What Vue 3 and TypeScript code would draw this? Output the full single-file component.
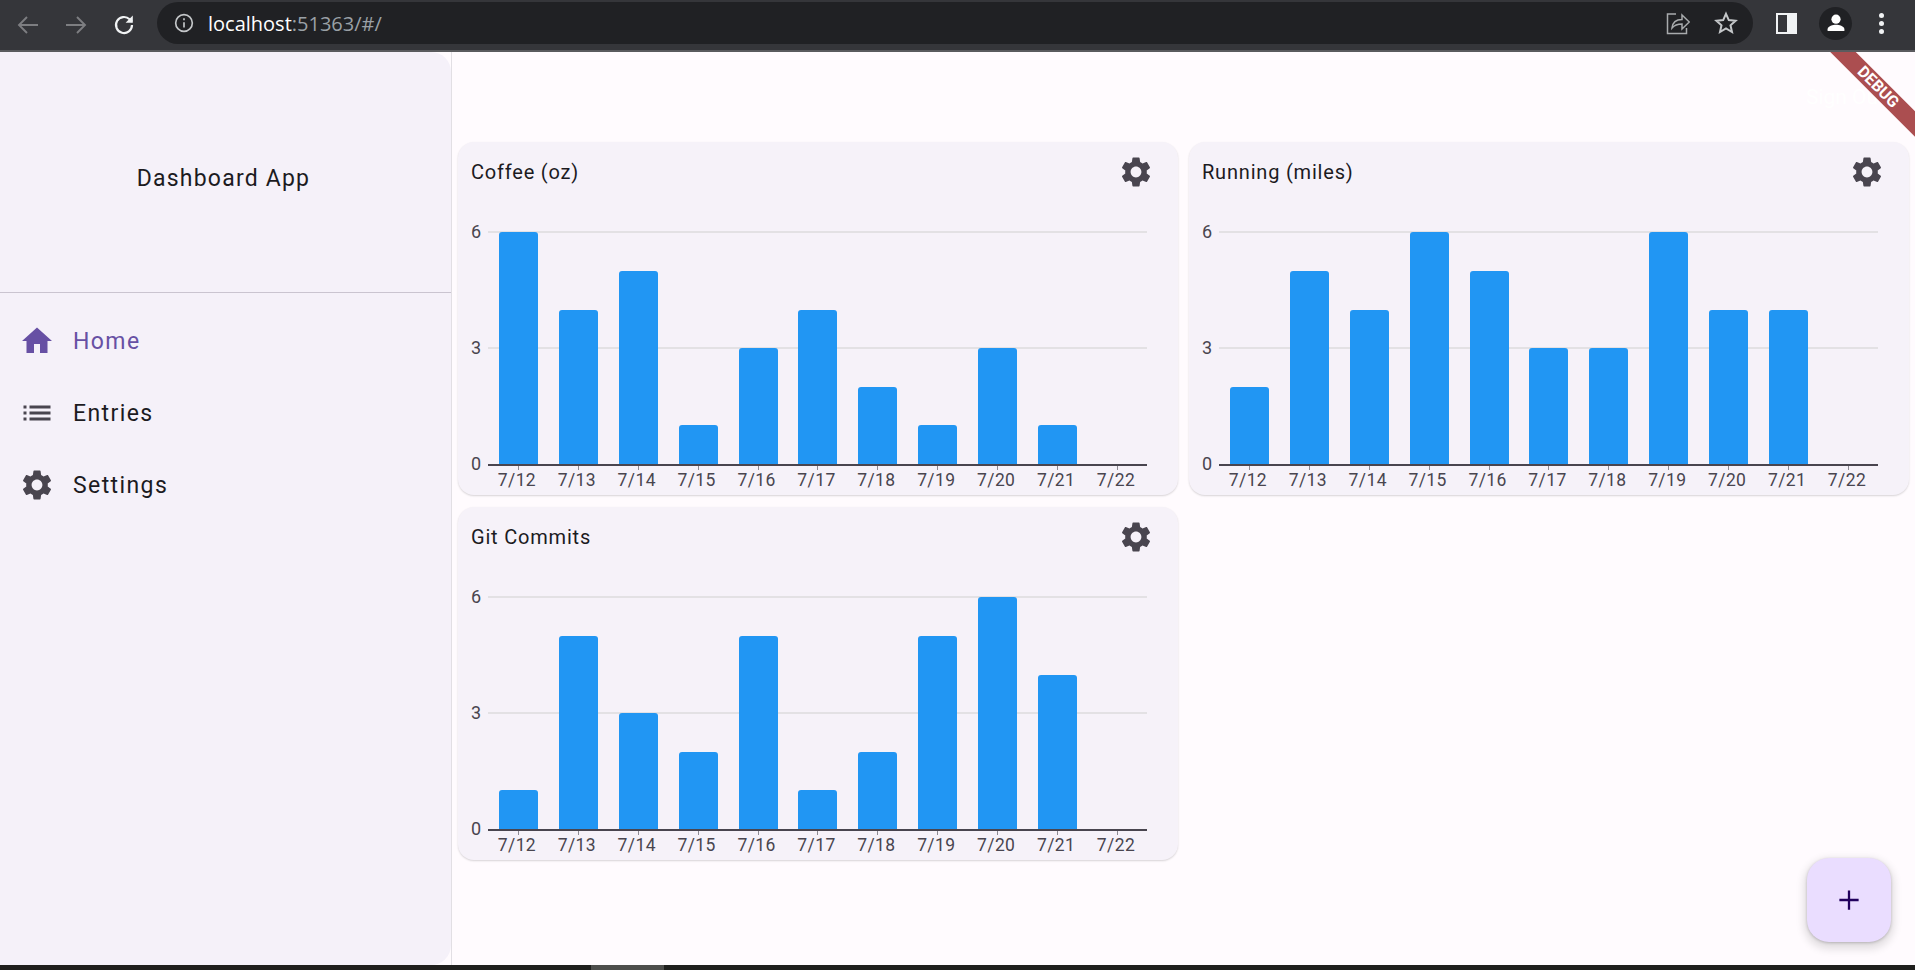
<script setup lang="ts">
interface Chart {
  title: string
  values: number[]
}

const charts: Chart[] = [
  { title: 'Coffee (oz)', values: [6, 4, 5, 1, 3, 4, 2, 1, 3, 1, 0] },
  { title: 'Running (miles)', values: [2, 5, 4, 6, 5, 3, 3, 6, 4, 4, 0] },
  { title: 'Git Commits', values: [1, 5, 3, 2, 5, 1, 2, 5, 6, 4, 0] },
]

const days = ['7/12', '7/13', '7/14', '7/15', '7/16', '7/17', '7/18', '7/19', '7/20', '7/21', '7/22']
const unit = 38.6

const gear =
  'M19.14 12.94c.04-.3.06-.61.06-.94 0-.32-.02-.64-.07-.94l2.03-1.58c.18-.14.23-.41.12-.61l-1.92-3.32c-.12-.22-.37-.29-.59-.22l-2.39.96c-.5-.38-1.03-.7-1.62-.94l-.36-2.54c-.04-.24-.24-.41-.48-.41h-3.84c-.24 0-.43.17-.47.41l-.36 2.54c-.59.24-1.13.57-1.62.94l-2.39-.96c-.22-.08-.47 0-.59.22L2.74 8.87c-.12.21-.08.47.12.61l2.03 1.58c-.05.3-.09.63-.09.94s.02.64.07.94l-2.03 1.58c-.18.14-.23.41-.12.61l1.92 3.32c.12.22.37.29.59.22l2.39-.96c.5.38 1.03.7 1.62.94l.36 2.54c.05.24.24.41.48.41h3.84c.24 0 .44-.17.47-.41l.36-2.54c.59-.24 1.13-.56 1.62-.94l2.39.96c.22.08.47 0 .59-.22l1.92-3.32c.12-.22.07-.47-.12-.61l-2.01-1.58zM12 15.6c-1.98 0-3.6-1.62-3.6-3.6s1.62-3.6 3.6-3.6 3.6 1.62 3.6 3.6-1.62 3.6-3.6 3.6z'
</script>

<template>
  <div class="screen">
    <header class="chrome">
      <div class="nav">
        <svg class="nav-icon" viewBox="0 0 24 24" fill="none" stroke="#7d7e81" stroke-width="1.9">
          <path d="M22 12H3M11 4l-8 8 8 8" />
        </svg>
        <svg class="nav-icon" viewBox="0 0 24 24" fill="none" stroke="#7d7e81" stroke-width="1.9">
          <path d="M2 12h19M13 4l8 8-8 8" />
        </svg>
        <svg class="nav-icon" viewBox="0 0 24 24" fill="none" stroke="#f1f3f4" stroke-width="2.2">
          <path d="M20 12a8 8 0 1 1-2.4-5.7L20 8.6" />
          <path d="M20.8 2.6v7.2h-7.2z" fill="#f1f3f4" stroke="none" />
        </svg>
      </div>
      <div class="omnibox">
        <svg class="info" viewBox="0 0 24 24" fill="none" stroke="#c4c7c9" stroke-width="2">
          <circle cx="12" cy="12" r="10" />
          <path d="M12 11v6.5M12 6.4v2.2" />
        </svg>
        <span class="url"><span class="host">localhost</span>:51363/#/</span>
        <svg class="share" viewBox="0 0 24 24" fill="none" stroke="#a8abad" stroke-width="1.5">
          <path d="M10 3H1.5v19.500h19V17" />
          <path d="M6 17c.5-5 4-8.500 10-8.500V4l7.300 7-7.300 7v-5c-4.500 0-7.500 1-10 4z" />
        </svg>
        <svg class="star" viewBox="0 0 24 24" fill="none" stroke="#c4c7c9" stroke-width="2">
          <path d="M12 2.800l2.800 6.300 6.800.7-5.100 4.500 1.500 6.700-6-3.500-6 3.500 1.500-6.700L2.400 9.800l6.800-.7z" />
        </svg>
      </div>
      <div class="actions">
        <span class="side-panel"><span class="side-panel-inner"></span></span>
        <span class="avatar">
          <svg viewBox="0 0 24 24" fill="#fff">
            <circle cx="12" cy="8.200" r="4.600" />
            <path d="M3.600 20v-1.800c0-3 5.600-4.400 8.400-4.400s8.400 1.400 8.400 4.400V20z" />
          </svg>
        </span>
        <span class="dots"><i></i><i></i><i></i></span>
      </div>
    </header>

    <div class="body">
      <aside class="drawer">
        <div class="drawer-head">Dashboard App</div>
        <nav class="menu">
          <a class="menu-item active">
            <svg class="menu-icon" viewBox="0 0 24 24" fill="currentColor">
              <path d="M10 20v-6h4v6h5v-8h3L12 3 2 12h3v8z" />
            </svg>
            Home
          </a>
          <a class="menu-item">
            <svg class="menu-icon" viewBox="0 0 24 24" fill="currentColor">
              <path d="M3 13h2v-2H3v2zm0 4h2v-2H3v2zm0-8h2V7H3v2zm4 4h14v-2H7v2zm0 4h14v-2H7v2zM7 7v2h14V7H7z" />
            </svg>
            Entries
          </a>
          <a class="menu-item">
            <svg class="menu-icon" viewBox="0 0 24 24" fill="currentColor">
              <path :d="gear" />
            </svg>
            Settings
          </a>
        </nav>
      </aside>

      <main class="main">
        <div class="appbar"><span class="sign-out">Sign Out</span></div>
        <section class="grid">
          <article v-for="chart in charts" :key="chart.title" class="card">
            <div class="card-head">
              <span class="card-title">{{ chart.title }}</span>
              <svg class="card-gear" viewBox="0 0 24 24" fill="currentColor">
                <path :d="gear" />
              </svg>
            </div>
            <div class="chart">
              <div class="y-axis">
                <span>6</span>
                <span>3</span>
                <span>0</span>
              </div>
              <div class="plot-wrap">
                <div class="plot">
                  <span class="gridline top"></span>
                  <span class="gridline mid"></span>
                  <div v-for="(value, i) in chart.values" :key="i" class="slot">
                    <div class="bar" :style="{ height: value * unit + 'px' }"></div>
                  </div>
                </div>
                <div class="x-axis">
                  <div v-for="day in days" :key="day" class="x-label">
                    <span class="tick"></span>
                    {{ day }}
                  </div>
                </div>
              </div>
            </div>
          </article>
        </section>
        <button class="fab" aria-label="Add">
          <svg viewBox="0 0 24 24" fill="none" stroke="#21005d" stroke-width="2.500">
            <path d="M12 1.500v21M1.500 12h21" />
          </svg>
        </button>
        <!-- flutter debug banner -->
        <div class="ribbon"><span>DEBUG</span></div>
      </main>
    </div>
    <footer class="taskbar"><span class="taskbar-thumb"></span></footer>
  </div>
</template>

<style>
html,
body {
  margin: 0;
  overflow: hidden;
}
</style>

<style scoped>
.screen {
  display: flex;
  flex-direction: column;
  width: 1915px;
  height: 970px;
  overflow: hidden;
  background: #fffbfe;
  font-family: Roboto, "Liberation Sans", sans-serif;
  color: #1c1b1f;
}

/* ===== browser bar ===== */
.chrome {
  display: flex;
  align-items: center;
  flex: none;
  height: 50px;
  background: #35363a;
  border-bottom: 2px solid #5a5b5e;
}

.nav {
  display: flex;
  align-items: center;
  gap: 24px;
  width: 157px;
  padding-left: 16px;
  box-sizing: border-box;
}

.nav-icon {
  width: 24px;
  height: 24px;
}

.omnibox {
  display: flex;
  align-items: center;
  width: 1596px;
  height: 42px;
  margin-top: -4px;
  border-radius: 21px;
  background: #202124;
  box-sizing: border-box;
  padding: 0 15px 0 17px;
}

.info {
  width: 20px;
  height: 20px;
}

.url {
  flex: 1;
  margin-left: 14px;
  color: #9aa0a6;
  font-family: "Open Sans", "Noto Sans", sans-serif;
  font-size: 20px;
}

.host {
  color: #fff;
}

.share {
  width: 24px;
  height: 24px;
  margin-right: 24px;
}

.star {
  width: 24px;
  height: 24px;
}

.actions {
  display: flex;
  align-items: center;
  flex: 1;
  padding-left: 23px;
  margin-top: -4px;
}

.side-panel {
  display: block;
  box-sizing: border-box;
  width: 21px;
  height: 21px;
  border: 2.500px solid #f1f3f4;
  background: #35363a;
}

.side-panel-inner {
  display: block;
  width: 8px;
  height: 100%;
  margin-left: auto;
  background: #f1f3f4;
}

.avatar {
  display: flex;
  align-items: center;
  justify-content: center;
  width: 33px;
  height: 33px;
  margin-left: 22px;
  border-radius: 50%;
  background: #202124;
}

.avatar svg {
  width: 24px;
  height: 24px;
}

.dots {
  display: flex;
  flex-direction: column;
  gap: 3px;
  margin-left: 27px;
}

.dots i {
  display: block;
  width: 5px;
  height: 5px;
  border-radius: 50%;
  background: #f1f3f4;
}

/* ===== app ===== */
.body {
  display: flex;
  flex: 1;
  min-height: 0;
}

.drawer {
  flex: none;
  width: 451px;
  border-radius: 0 20px 20px 0;
  background: #f5f1f9;
}

.drawer-head {
  display: flex;
  align-items: center;
  justify-content: center;
  height: 241px;
  padding: 12px 4px 0 0;
  box-sizing: border-box;
  border-bottom: 1.500px solid #cac4d0;
  font-size: 23px;
  letter-spacing: 1.2px;
}

.menu {
  display: flex;
  flex-direction: column;
  padding-top: 12px;
}

.menu-item {
  display: flex;
  align-items: center;
  gap: 18px;
  height: 72px;
  padding-left: 19px;
  color: #1c1b1f;
  font-size: 23px;
  letter-spacing: 1.4px;
}

.menu-item .menu-icon {
  color: #49454f;
}

.menu-item.active,
.menu-item.active .menu-icon {
  color: #6750a4;
}

.menu-icon {
  width: 36px;
  height: 36px;
  flex: none;
}

.main {
  position: relative;
  flex: 1;
  min-width: 0;
  overflow: hidden;
  border-left: 1px solid #e2dfe4;
}

.appbar {
  display: flex;
  align-items: center;
  justify-content: flex-end;
  height: 90px;
  padding-right: 30px;
  box-sizing: border-box;
}

.sign-out {
  color: #fff;
  font-size: 21px;
}

.grid {
  display: grid;
  grid-template-columns: 720px 720px;
  grid-auto-rows: 353px;
  gap: 12px 11px;
  padding: 0 6px;
}

.card {
  box-sizing: border-box;
  border-radius: 16px;
  background: #f6f2f9;
  box-shadow: 0 1px 2px rgba(0, 0, 0, 0.16);
  padding: 0 13px;
}

.card-head {
  display: flex;
  align-items: center;
  justify-content: space-between;
  height: 60px;
}

.card-title {
  font-size: 20px;
  letter-spacing: 0.8px;
}

.card-gear {
  width: 36px;
  height: 36px;
  margin-right: 11px;
  color: #49454f;
}

.chart {
  display: flex;
  margin-top: 30px;
}

.y-axis {
  display: flex;
  flex-direction: column;
  justify-content: space-between;
  flex: none;
  width: 17px;
  height: 250px;
  margin-top: -9px;
  color: #49454f;
  font-size: 18px;
  line-height: 18px;
}

.plot-wrap {
  width: 659px;
}

.plot {
  position: relative;
  display: flex;
  align-items: flex-end;
  height: 232px;
  border-bottom: 2px solid #49454f;
}

.gridline {
  position: absolute;
  left: 0;
  right: 0;
  height: 2px;
  background: #e3e1e4;
}

.gridline.top {
  top: -1px;
}

.gridline.mid {
  top: 115px;
}

.slot {
  position: relative;
  display: flex;
  justify-content: center;
  flex: 1;
}

.bar {
  width: 39px;
  margin-left: 1px;
  border-radius: 3px 3px 0 0;
  background: #2196f3;
}

.x-axis {
  display: flex;
}

.x-label {
  position: relative;
  flex: 1;
  padding: 3px 2px 0 0;
  color: #49454f;
  font-size: 17.500px;
  line-height: 22px;
  letter-spacing: 0.4px;
  text-align: center;
}

.tick {
  position: absolute;
  top: 0;
  left: 50%;
  width: 1px;
  height: 4px;
  background: #8d8a92;
}

.fab {
  position: absolute;
  right: 24px;
  bottom: 23px;
  display: flex;
  align-items: center;
  justify-content: center;
  width: 84px;
  height: 84px;
  padding: 0;
  border: none;
  border-radius: 22px;
  background: #eaddff;
  box-shadow: 0 4px 8px 3px rgba(0, 0, 0, 0.12), 0 1px 3px rgba(0, 0, 0, 0.2);
}

.fab svg {
  width: 22px;
  height: 22px;
}

.taskbar {
  flex: none;
  height: 5px;
  background: #1f1f1d;
}

.taskbar-thumb {
  display: block;
  width: 73px;
  height: 100%;
  margin-left: 591px;
  background: #4d4d4b;
}

.ribbon {
  position: absolute;
  top: 26px;
  right: -38px;
  width: 150px;
  height: 18px;
  background: #ab4e50;
  transform: rotate(45deg);
  text-align: center;
}

.ribbon span {
  display: block;
  color: #fff;
  font-size: 16px;
  font-weight: 700;
  line-height: 18px;
}
</style>
